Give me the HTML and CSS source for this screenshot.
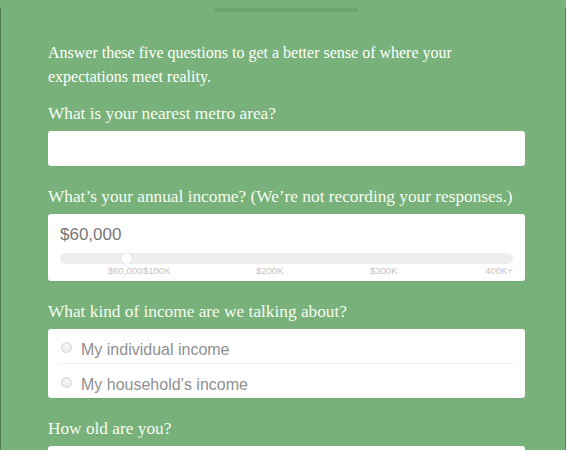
FILE: index.html
```html
<!DOCTYPE html>
<html lang="en">
<head>
<meta charset="utf-8">
<title>Income quiz</title>
<link rel="stylesheet" href="styles.css">
</head>
<body>
<div class="page">
  <div class="handle"></div>
  <div class="content">
    <p class="intro">Answer these five questions to get a better sense of where your expectations meet reality.</p>

    <div class="question">
      <div class="label">What is your nearest metro area?</div>
      <div class="card card-input"></div>
    </div>

    <div class="question">
      <div class="label">What’s your annual income? (We’re not recording your responses.)</div>
      <div class="card card-income">
        <div class="amount">$60,000</div>
        <div class="slider">
          <div class="track"><span class="knob"></span></div>
          <div class="ticks">
            <span class="tick tick-current">$60,000</span>
            <span class="tick tick-100">$100K</span>
            <span class="tick tick-200">$200K</span>
            <span class="tick tick-300">$300K</span>
            <span class="tick tick-400">400K+</span>
          </div>
        </div>
      </div>
    </div>

    <div class="question">
      <div class="label">What kind of income are we talking about?</div>
      <div class="card card-radio">
        <div class="option"><span class="radio"></span><span class="option-text">My individual income</span></div>
        <div class="option"><span class="radio"></span><span class="option-text">My household’s income</span></div>
      </div>
    </div>

    <div class="question">
      <div class="label">How old are you?</div>
      <div class="card card-input"></div>
    </div>
  </div>
</div>
</body>
</html>
```

FILE: styles.css
```css
html, body {
  margin: 0;
  padding: 0;
  height: 100%;
}

body {
  background: #78b27a;
  overflow: hidden;
}

.page {
  min-height: 100%;
  box-sizing: border-box;
  border-left: 1px solid #4f7c51;
  border-right: 1px solid #4f7c51;
}

.handle {
  width: 143px;
  height: 4px;
  margin: 8px auto 0 214px;
  background: #6ca56e;
}

.content {
  padding: 0 40px 0 47px;
}

.intro {
  margin: 29px 0 0;
  font-family: "Liberation Serif", "Times New Roman", serif;
  font-size: 16px;
  line-height: 24px;
  color: #ffffff;
}

.question {
  margin-top: 18px;
}

.question:first-of-type {
  margin-top: 12px;
}

.label {
  font-family: "Liberation Serif", "Times New Roman", serif;
  font-size: 17.3px;
  line-height: 24px;
  color: #f6fbf2;
  padding-top: 1px;
  margin-bottom: 5px;
}

.card {
  background: #ffffff;
  border-radius: 3px;
  box-shadow: 0 1px 1px rgba(0, 0, 0, 0.06);
}

.card-input {
  height: 35px;
}

.card-income {
  padding: 11px 12px 4px;
  height: 52px;
}

.amount {
  font-family: "Liberation Sans", Arial, sans-serif;
  font-size: 17px;
  line-height: 20px;
  color: #777777;
}

.slider {
  position: relative;
  margin-top: 8px;
}

.track {
  position: relative;
  height: 11px;
  border-radius: 6px;
  background: #eeeeee;
}

.knob {
  position: absolute;
  left: 61px;
  top: 0;
  width: 11px;
  height: 11px;
  border-radius: 50%;
  background: #ffffff;
  box-shadow: 0 0 1px rgba(0, 0, 0, 0.25);
}

.ticks {
  position: relative;
  height: 13px;
  font-family: "Liberation Sans", Arial, sans-serif;
  font-size: 9.5px;
  line-height: 13px;
  color: #c4c4c4;
}

.tick {
  position: absolute;
  top: 0;
}

.tick-current { left: 48px; }
.tick-100 { left: 83px; }
.tick-200 { left: 196px; }
.tick-300 { left: 310px; }
.tick-400 { right: 0; }

.card-radio {
  padding: 0 12px 1px;
}

.option {
  display: flex;
  align-items: flex-start;
  height: 34px;
  box-sizing: border-box;
  padding-top: 11px;
}

.option + .option {
  border-top: 1px solid #eeeeee;
}

.radio {
  flex: none;
  width: 9px;
  height: 9px;
  margin: 2px 9px 0 1px;
  border: 1px solid #d6d6d6;
  border-radius: 50%;
  background: radial-gradient(circle at 50% 40%, #f8f8f8, #e4e4e4);
}

.option-text {
  font-family: "Liberation Sans", Arial, sans-serif;
  font-size: 16px;
  line-height: 20px;
  color: #8f8f8f;
}
```
